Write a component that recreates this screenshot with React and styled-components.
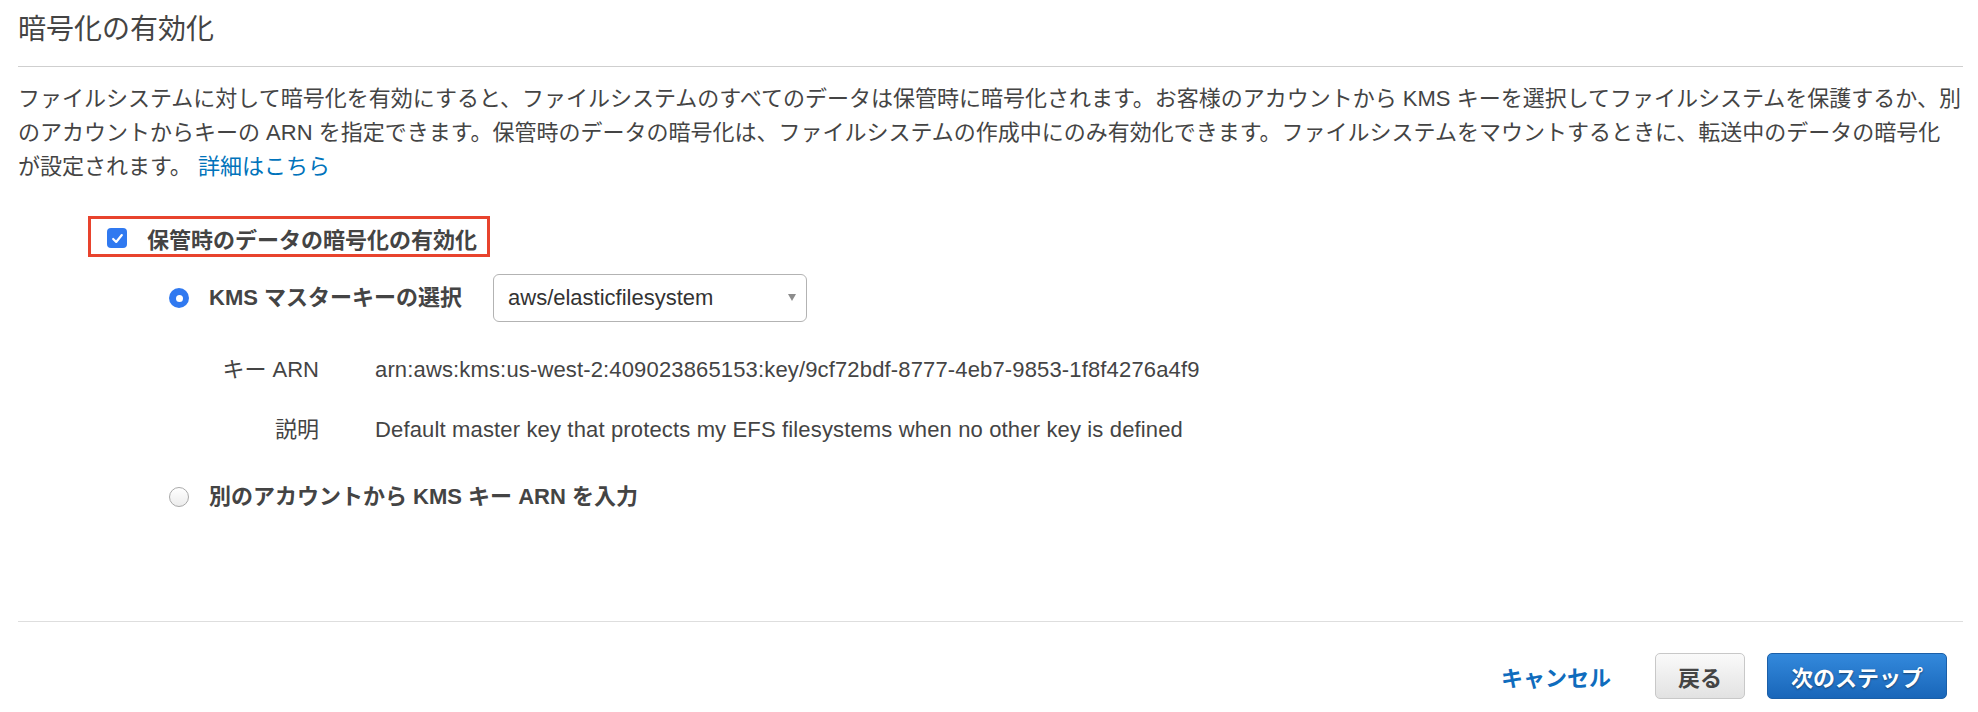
import React, { useState } from 'react'
import styled, { createGlobalStyle } from 'styled-components'

const GlobalStyle = createGlobalStyle`
  body {
    margin: 0;
    background: #fff;
    font-family: "Liberation Sans", "Noto Sans CJK JP", sans-serif;
    color: #444;
  }
`

const Page = styled.div`
  padding: 0 15px 0 18px;
`

const Header = styled.div`
  padding: 13px 0 19px;
  border-bottom: 1px solid #cfcfcf;
`

const Title = styled.h2`
  margin: 0;
  font-size: 28px;
  line-height: 34px;
  font-weight: normal;
  color: #444;
`

const Intro = styled.p`
  margin: 15px 0 0;
  font-size: 22px;
  line-height: 34px;
  white-space: nowrap;
`

const Link = styled.a`
  color: #0073bb;
  text-decoration: none;
  cursor: pointer;
`

const Options = styled.div`
  margin: 32px 0 0 70px;
`

const Highlight = styled.label`
  display: inline-flex;
  align-items: center;
  gap: 20px;
  box-sizing: border-box;
  height: 41px;
  padding: 3px 10px 0 16px;
  border: 3px solid #e8432d;
  font-size: 22px;
  font-weight: bold;
  color: #444;
  cursor: pointer;
`

const CheckBox = styled.span`
  display: flex;
  align-items: center;
  justify-content: center;
  width: 20px;
  height: 20px;
  border-radius: 4px;
  background: ${p => (p.checked ? '#3079f0' : '#fff')};
  border: ${p => (p.checked ? 'none' : '1px solid #b5b5b5')};
  box-sizing: border-box;
`

const RadioGroup = styled.div`
  margin: 17px 0 0 81px;
`

const RadioRow = styled.label`
  display: flex;
  align-items: center;
  gap: 20px;
  margin-top: ${p => p.top || 0}px;
  font-size: 22px;
  line-height: 34px;
  font-weight: bold;
  color: #444;
  cursor: pointer;
`

const RadioDot = styled.span`
  flex: none;
  display: flex;
  align-items: center;
  justify-content: center;
  width: 20px;
  height: 20px;
  border-radius: 50%;
  box-sizing: border-box;
  background: ${p => (p.checked ? '#3079f0' : 'linear-gradient(#fff, #ececec)')};
  border: ${p => (p.checked ? 'none' : '1px solid #a9a9a9')};

  &::after {
    content: '';
    display: ${p => (p.checked ? 'block' : 'none')};
    width: 7px;
    height: 7px;
    border-radius: 50%;
    background: #fff;
  }
`

const Select = styled.div`
  position: relative;
  box-sizing: border-box;
  width: 314px;
  height: 48px;
  margin-left: 11px;
  padding-left: 14px;
  display: flex;
  align-items: center;
  border: 1px solid #b3b3b3;
  border-radius: 6px;
  background: #fff;
  font-size: 22px;
  font-weight: normal;
  color: #333;
`

const Caret = styled.span`
  position: absolute;
  right: 10px;
  top: 19px;
  width: 0;
  height: 0;
  border-left: 4.5px solid transparent;
  border-right: 4.5px solid transparent;
  border-top: 7px solid #8c8c8c;
`

const Details = styled.dl`
  display: grid;
  grid-template-columns: 111px auto;
  column-gap: 56px;
  row-gap: 26px;
  margin: 31px 0 0 39px;
  font-size: 22px;
  line-height: 34px;
`

const Term = styled.dt`
  text-align: right;
  color: #444;
`

const Value = styled.dd`
  margin: 0;
  color: #444;
  white-space: nowrap;
  letter-spacing: 0.15px;
`

const Footer = styled.div`
  display: flex;
  justify-content: flex-end;
  align-items: center;
  margin-top: 107px;
  padding: 31px 16px 13px 0;
  border-top: 1px solid #dedede;
`

const CancelLink = styled.a`
  margin-right: 44px;
  font-size: 22px;
  font-weight: bold;
  color: #0f6cbd;
  cursor: pointer;
`

const Button = styled.button`
  box-sizing: border-box;
  height: 46px;
  padding: 0 ${p => (p.primary ? 23 : 22)}px;
  margin-left: ${p => p.gap || 0}px;
  border-radius: 5px;
  font-family: inherit;
  font-size: 22px;
  font-weight: bold;
  cursor: pointer;
  border: 1px solid ${p => (p.primary ? '#1b5fa8' : '#c8c8c8')};
  color: ${p => (p.primary ? '#fff' : '#444')};
  background: ${p =>
    p.primary
      ? 'linear-gradient(#3389dc, #1966b9)'
      : 'linear-gradient(#fafafa, #e2e2e2)'};
  text-shadow: ${p => (p.primary ? '0 1px 2px rgba(0,0,0,0.45)' : 'none')};
`

function App () {
  const [enabled, setEnabled] = useState(true)
  const [source, setSource] = useState('master')

  return (
    <Page>
      <GlobalStyle />
      <Header>
        <Title>暗号化の有効化</Title>
      </Header>
      <Intro>
        ファイルシステムに対して暗号化を有効にすると、ファイルシステムのすべてのデータは保管時に暗号化されます。お客様のアカウントから KMS キーを選択してファイルシステムを保護するか、別
        <br />
        のアカウントからキーの ARN を指定できます。保管時のデータの暗号化は、ファイルシステムの作成中にのみ有効化できます。ファイルシステムをマウントするときに、転送中のデータの暗号化
        <br />
        が設定されます。 <Link>詳細はこちら</Link>
      </Intro>

      <Options>
        <Highlight onClick={() => setEnabled(v => !v)}>
          <CheckBox checked={enabled}>
            {enabled && (
              <svg width='13' height='13' viewBox='0 0 12 12'>
                <path d='M2 6.4 L4.8 9.2 L10 2.8' fill='none' stroke='#fff' strokeWidth='2' strokeLinecap='round' strokeLinejoin='round' />
              </svg>
            )}
          </CheckBox>
          保管時のデータの暗号化の有効化
        </Highlight>

        <RadioGroup>
          <RadioRow onClick={() => setSource('master')}>
            <RadioDot checked={source === 'master'} />
            KMS マスターキーの選択
            <Select>
              aws/elasticfilesystem
              <Caret />
            </Select>
          </RadioRow>

          <Details>
            <Term>キー ARN</Term>
            <Value>arn:aws:kms:us-west-2:409023865153:key/9cf72bdf-8777-4eb7-9853-1f8f4276a4f9</Value>
            <Term>説明</Term>
            <Value>Default master key that protects my EFS filesystems when no other key is defined</Value>
          </Details>

          <RadioRow top={33} onClick={() => setSource('other')}>
            <RadioDot checked={source === 'other'} />
            別のアカウントから KMS キー ARN を入力
          </RadioRow>
        </RadioGroup>
      </Options>

      <Footer>
        <CancelLink>キャンセル</CancelLink>
        <Button>戻る</Button>
        <Button primary gap={22}>次のステップ</Button>
      </Footer>
    </Page>
  )
}

export default App
